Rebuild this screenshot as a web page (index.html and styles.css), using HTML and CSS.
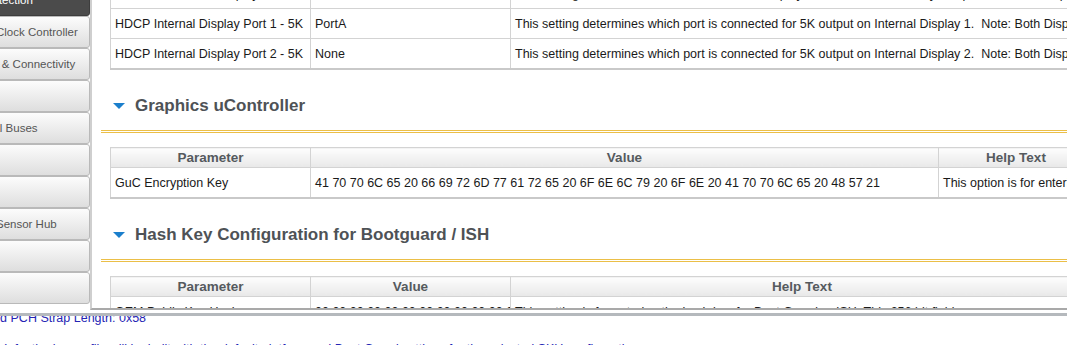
FILE: index.html
```html
<!DOCTYPE html>
<html lang="en">
<head>
    <meta charset="UTF-8">
    <title>Flash Image Tool</title>
    <link rel="stylesheet" href="styles.css">
</head>
<body>
    <div class="workspace">
        <div class="sidebar">
            <div class="nav-list">
                <div class="nav-btn active">Platform Protection</div>
                <div class="nav-btn">Integrated Clock Controller</div>
                <div class="nav-btn">Networking &amp; Connectivity</div>
                <div class="nav-btn">Power</div>
                <div class="nav-btn nudge">Misc. Serial Buses</div>
                <div class="nav-btn">Debug</div>
                <div class="nav-btn">GPIO</div>
                <div class="nav-btn">Integrated Sensor Hub</div>
                <div class="nav-btn">Straps</div>
                <div class="nav-btn">Build</div>
            </div>
        </div>

        <div class="content">
            <div class="scroll">
                <table class="grid">
                    <colgroup><col class="c-param"><col class="c-value"><col></colgroup>
                    <tr>
                        <td>HDCP 5K Internal Display</td>
                        <td>Enabled</td>
                        <td>This setting determines whether the Internal Display is driven in 5K mode by two ports. Note: Both ports must be set.</td>
                    </tr>
                    <tr>
                        <td>HDCP Internal Display Port 1 - 5K</td>
                        <td>PortA</td>
                        <td>This setting determines which port is connected for 5K output on Internal Display 1.&nbsp; Note: Both Display ports must be configured.</td>
                    </tr>
                    <tr>
                        <td>HDCP Internal Display Port 2 - 5K</td>
                        <td>None</td>
                        <td>This setting determines which port is connected for 5K output on Internal Display 2.&nbsp; Note: Both Display ports must be configured.</td>
                    </tr>
                </table>

                <div class="section-head">
                    <span class="arrow"></span>
                    <h2>Graphics uController</h2>
                </div>

                <table class="grid">
                    <colgroup><col class="c-param"><col class="c-wide"><col></colgroup>
                    <tr>
                        <th>Parameter</th>
                        <th>Value</th>
                        <th>Help Text</th>
                    </tr>
                    <tr>
                        <td>GuC Encryption Key</td>
                        <td>41 70 70 6C 65 20 66 69 72 6D 77 61 72 65 20 6F 6E 6C 79 20 6F 6E 20 41 70 70 6C 65 20 48 57 21</td>
                        <td>This option is for entering the GuC encryption key.</td>
                    </tr>
                </table>

                <div class="section-head">
                    <span class="arrow"></span>
                    <h2>Hash Key Configuration for Bootguard / ISH</h2>
                </div>

                <table class="grid">
                    <colgroup><col class="c-param"><col class="c-value"><col></colgroup>
                    <tr>
                        <th>Parameter</th>
                        <th>Value</th>
                        <th>Help Text</th>
                    </tr>
                    <tr>
                        <td>OEM Public Key Hash</td>
                        <td>00 00 00 00 00 00 00 00 00 00 00 00 00 00 00 00</td>
                        <td>This setting is for entering the hash key for Boot Guard or ISH. This 256 bit field</td>
                    </tr>
                </table>
            </div>
        </div>
    </div>

    <div class="log">
        <div class="log-lines">
            <div class="log-line cut">Calculated PCH Strap Length: 0x58</div>
            <div class="log-line">Info: the image file will be built with the default platform and Boot Guard settings for the selected SKU configuration.</div>
        </div>
    </div>
</body>
</html>
```

FILE: styles.css
```css
body {
    margin: 0;
    font-family: "Liberation Sans", Arial, sans-serif;
    font-size: 12.5px;
    color: #1a1a1a;
    background: #fff;
    overflow: hidden;
}

.workspace {
    display: flex;
    height: 310px;
}

.sidebar {
    width: 90px;
    flex: none;
    overflow: hidden;
}
.nav-list {
    width: 150px;
    margin: -16px 0 0 -60px;
}
.nav-btn {
    height: 30px;
    display: flex;
    align-items: center;
    border: 1px solid #b9b9b9;
    border-radius: 3px;
    background: linear-gradient(#fcfcfc, #dedede);
    color: #555;
    font-size: 11.5px;
    white-space: nowrap;
}
.nav-btn.nudge {
    text-indent: 2px;
}
.nav-btn.active {
    text-indent: -6px;
    background: #4b4b4b;
    border-color: #3d3d3d;
    color: #fff;
}

.content {
    flex: 1;
    min-width: 0;
    overflow: hidden;
    border-left: 2px solid #cfcfcf;
    border-bottom: 2px solid #a9a9a9;
}
.scroll {
    margin-top: -22px;
    padding-left: 9px;
}

.grid {
    width: 984px;
    margin-left: 9px;
    border-collapse: collapse;
    table-layout: fixed;
    border-bottom: 2px solid #c9c9c9;
}
.c-param { width: 200px; }
.c-value { width: 200px; }
.c-wide { width: 628px; }
.grid td, .grid th {
    padding: 0 4px;
    border: 1px solid #d3d3d3;
    white-space: nowrap;
    overflow: hidden;
}
.grid td {
    height: 29px;
}
.grid th {
    height: 19px;
    background: linear-gradient(#fdfdfd, #e8e8e8);
    color: #555a5e;
    font-size: 13.5px;
    font-weight: bold;
}

.section-head {
    display: flex;
    align-items: center;
    gap: 10px;
    margin-top: 26px;
    padding: 0 0 14px 12px;
    border-bottom: 3px double #ebbf48;
}
.section-head h2 {
    margin: 0;
    font-size: 17px;
    line-height: 20px;
    color: #4e5256;
}
.section-head + .grid {
    margin-top: 14px;
}
.arrow {
    width: 0;
    height: 0;
    border-left: 6.5px solid transparent;
    border-right: 6.5px solid transparent;
    border-top: 6px solid #1b7fcc;
}

.log {
    margin-top: 3px;
    height: 29px;
    overflow: hidden;
    border-top: 3px solid #b5b9bd;
    color: #2424b4;
}
.log-lines {
    margin-top: -13px;
    line-height: 31px;
    white-space: nowrap;
}
.log-line {
    padding-left: 4px;
}
.log-line.cut {
    padding-left: 0;
    margin-left: -52px;
}
```
